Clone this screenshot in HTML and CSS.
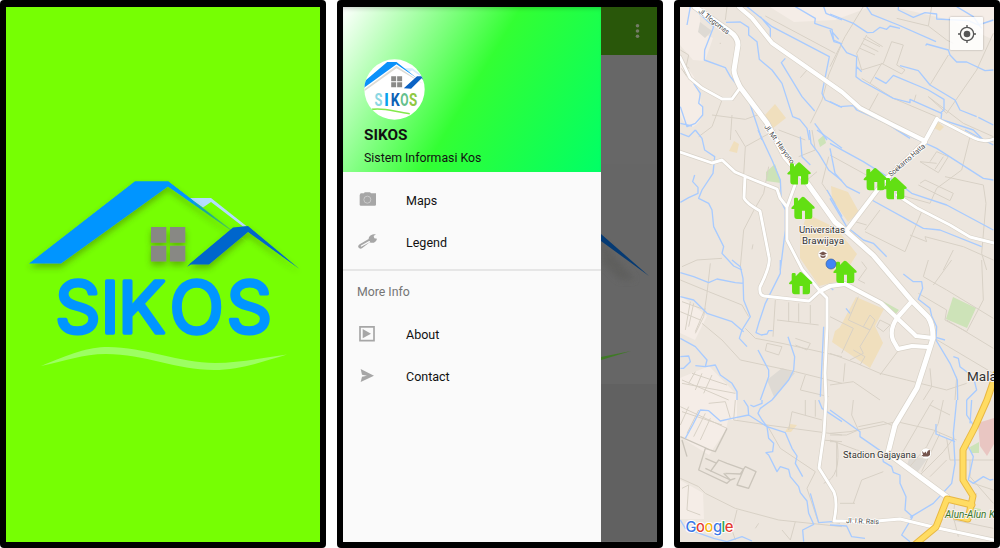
FILE: index.html
```html
<!DOCTYPE html>
<html lang="id">
<head>
<meta charset="utf-8">
<title>SIKOS</title>
<link rel="stylesheet" href="styles.css">
</head>
<body>
<main class="phones">
  <section class="phone">
    <div class="screen splash">
      <svg class="splash-logo" viewBox="20 170 290 210" width="290" height="210">
        <defs>
          <filter id="soft" x="-20%" y="-20%" width="140%" height="150%"><feDropShadow dx="0" dy="4" stdDeviation="3" flood-color="#365000" flood-opacity=".4"/></filter>
          <linearGradient id="fade" gradientUnits="userSpaceOnUse" x1="190" y1="199" x2="250" y2="245"><stop offset="0" stop-color="#0095ff"/><stop offset=".3" stop-color="#20a890" /><stop offset=".65" stop-color="#4dc94d"/><stop offset="1" stop-color="#76ff03" stop-opacity="0"/></linearGradient>
        </defs>
        <path fill="#b3dcff" d="M189 198H211L247 226.500H243L211 202L203 207.500Z"/>
        <g filter="url(#soft)">
          <path fill="#0095ff" d="M29 263.500L135 181.300H168L191 199L196 204L168 186.500L61 263.500Z"/>
          <path fill="url(#fade)" d="M168 181.300L250 244L168 186.500Z"/>
          <g fill="#888884"><path d="M151 227h15.300v15.700H151zM170 227h15.300v15.700H170zM151 245.700h15.300v15.700H151zM170 245.700h15.300v15.700H170z"/></g>
          <path fill="#0066cc" d="M187 267L190 263.500L233 227.500L248 226L299.500 269L248 232L209 264.500H191Z"/>
        </g>
        <text class="wordmark" y="332.500"><tspan x="55">S</tspan><tspan x="100.500">I</tspan><tspan x="118">K</tspan><tspan x="169.500">O</tspan><tspan x="226.500">S</tspan></text>
        <path fill="#9cff62" d="M41 366C70 354 88 347 108 347C144 347 180 363 215 363C240 363 262 358 287 354.500C265 361 240 370 214 370C176 370 145 354 106 354C82 354 66 361 41 366Z"/>
      </svg>
    </div>
  </section>

  <section class="phone">
    <div class="screen app">
      <aside class="drawer">
        <header class="drawer-header">
          <svg class="avatar" viewBox="0 0 184 184" width="61" height="61">
            <defs><clipPath id="disc"><circle cx="92" cy="92" r="91"/></clipPath></defs>
            <circle cx="92" cy="92" r="91" fill="#fff"/>
            <g clip-path="url(#disc)">
              <path fill="#d5edfc" d="M120 28H146L184 56V62L145 34L136 40Z"/>
              <path fill="#dddbd5" d="M0 92L98 20L180 76L98 28L0 98Z"/>
              <path fill="#0a91fa" d="M-4 72L70 9H98L160 58L98 16L0 87Z"/>
              <path fill="#8a8a88" d="M82 52h15v15H82zM100 52h15v15h-15zM82 70h15v15H82zM100 70h15v15h-15z"/>
              <path fill="#0b62c4" d="M120 88L160 52H176L184 62V70L174 58L142 90Z"/>
              <g class="avatar-word"><text x="32" y="141" fill="#8bd7e3" textLength="24" lengthAdjust="spacingAndGlyphs">S</text><text x="60" y="141" fill="#08a2ee" textLength="15" lengthAdjust="spacingAndGlyphs">I</text><text x="81" y="141" fill="#0c62b5" textLength="27" lengthAdjust="spacingAndGlyphs">K</text><text x="109" y="141" fill="#64c08c" textLength="25" lengthAdjust="spacingAndGlyphs">O</text><text x="136" y="141" fill="#8fc943" textLength="25" lengthAdjust="spacingAndGlyphs">S</text></g>
              <path fill="none" stroke="#83e94b" stroke-width="5" d="M24 152C62 146 94 160 138 165"/>
            </g>
          </svg>
          <h1 class="drawer-title">SIKOS</h1>
          <p class="drawer-subtitle">Sistem Informasi Kos</p>
        </header>
        <nav class="menu">
          <a class="menu-item"><svg class="icon" viewBox="0 0 60 48"><path fill="#a6a6a6" d="M8 4H18L20 1H36L39 4H54V38Q54 41 50 41H9Q5 41 5 38V9Z"/><circle cx="28" cy="23" r="10.500" fill="none" stroke="#c9c9c9" stroke-width="3"/></svg>Maps</a>
          <a class="menu-item"><svg class="icon" viewBox="0 0 60 48"><path fill="#a6a6a6" d="M32 15C32 5 42 0 54 1L47 6L49 13L57 14C55 25 45 29 35 25L12 43Q5 46 1 40Q-1 34 5 31Z"/><path d="M10 36L34 23" stroke="#fafafa" stroke-width="4" stroke-linecap="round"/></svg>Legend</a>
          <hr class="divider">
          <h2 class="menu-heading">More Info</h2>
          <a class="menu-item"><svg class="icon" viewBox="0 0 60 48"><path fill="none" stroke="#a6a6a6" stroke-width="5" d="M6 2.500H48V44H6Z"/><path fill="#a6a6a6" d="M14 9L39 23L14 37Z"/></svg>About</a>
          <a class="menu-item"><svg class="icon" viewBox="0 0 60 48"><path fill="#a6a6a6" d="M8 3L48 23L8 42L12 26L27 23L12 20Z"/></svg>Contact</a>
        </nav>
      </aside>
      <div class="backdrop">
        <div class="toolbar"><svg viewBox="0 0 56 49" width="56" height="49" fill="#737c66"><circle cx="36.500" cy="18.700" r="1.800"/><circle cx="36.500" cy="24" r="1.800"/><circle cx="36.500" cy="29.300" r="1.800"/></svg></div>
        <svg class="backdrop-art" viewBox="601 55 56 486" width="56" height="486">
          <path fill="#696969" d="M601 55h56v109h-56z" opacity=".35"/>
          <path fill="#5f5f5d" filter="url(#haze)" d="M601 239L635 280L620 280L601 262Z"/>
          <defs><filter id="haze" x="-50%" y="-50%" width="200%" height="200%"><feGaussianBlur stdDeviation="3"/></filter></defs>
          <path fill="#053a73" d="M601 234L649 276L601 241Z"/>
          <path fill="#3f7a25" d="M601 357L631 351L601 360Z"/>
          <path fill="#606060" d="M601 384h56v157h-56z" opacity=".7"/>
        </svg>
      </div>
    </div>
  </section>

  <section class="phone">
    <div class="screen map">
      <svg class="map-canvas" viewBox="680 7 314 535" width="314" height="535">
        <defs>
          <path id="house" d="M36 0Q38 0 40 2L70 30Q74 36 66 36H64V60Q64 67 57 67H42V42H33V67H18Q10 67 10 58V37H3Q-2 35 3 31L9 25V7Q9 3 13 3H17Q21 3 21 7V13L33 1Q34 0 36 0Z"/>
          <g id="roads">
            <path class="wide" d="M695 7L729 31Q738 37 738 45L734 70Q734 75 740 87L767 123L785 157L805 180L835 222L847 232L873 255L912 301L928 317Q933 324 933 338L927 357L917 388L895 425L888 453L897 460L947 497"/>
            <path class="avenue" d="M925 142L885 180L847 230M937 119L925 141M820 291L830 286L845 284L881 303L897 318L913 333L916 336L933 338M912 301L897 318Q889 330 893 340L898 349L912 346L928 347M739 7L752 18L772 43L842 92L860 108L893 125L925 141"/>
            <path class="mid" d="M937 119L974 138Q984 143 994 139M897 195L917 208L950 225L970 237L994 243M680 57L690 78L702 88L722 99L732 99L740 88M680 152L712 163L722 160L735 172L754 180L777 189L780 198L787 207L795 185M745 176L744 198Q746 203 760 211L769 257Q771 265 760 287Q759 295 764 296L809 301L820 291M787 207L787 240L802 269L820 291L827 298L827 328L825 373L826 400L824 433L819 468L834 492Q838 502 834 521H842L865 522L900 519L933 527L994 540"/>
          </g>
          <path id="yellow" d="M996 374L987 400L975 427L963 450L963 480L973 496L968 519L947 514M947 499L972 505M947 499L936 527L912 547"/>
        </defs>
        <path fill="#ede6de" d="M680 7h314v535H680z"/>
        <g fill="#f5ede7">
          <path d="M680 7H699L701 32L713 38L705 61L693 60L680 45ZM680 57L694 77L702 106Q704 121 693 127Q680 124 680 110ZM770 7H870L835 20L794 22ZM894 7H994V40L950 20ZM680 295L707 316L695 340L680 333ZM680 378L709 366L737 395L737 420H728L726 430L709 455L680 437ZM680 480L703 493L704 519H680Z"/>
        </g>
        <g fill="#f0dfbd">
          <path d="M765 115L775 104L786 118L772 129ZM734 141L739 144L737 153L729 151ZM831 186L848 192L859 212L848 222L832 199ZM807 214L836 228L857 254L840 281L819 286L800 258V235ZM856 297L884 309L875 326L883 343L870 368L832 342ZM938 122L944 127L940 131L934 128ZM790 424L797 425L791 432H785ZM835 331L843 325L841 344L832 342Z"/>
        </g>
        <g fill="#cde3b8"><path d="M766 172L775 164L781 183L766 181ZM818 140L824 135L826 143L820 147ZM879 299L899 310L894 316ZM953 297L976 308L967 328L946 319ZM970 447L979 442V453H971ZM970 507L981 509L976 520L968 512Z"/></g>
        <g fill="#dedad4"><path d="M700 22L712 31L705 38L698 32ZM767 380L782 368L795 373L774 397ZM910 456L927 459L917 473L907 465Z"/></g>
        <path fill="#e9c6c2" d="M978 423L994 418V444L987 456L980 446Z"/>

        <g class="lanes">
          <g transform="translate(672 0) scale(.33333)">
            <path d="M165 20L160 60M280 48L490 160M510 130L470 225L450 300L415 370M385 233L405 210M150 300L120 380L80 410M120 345L220 358L265 342M180 345L175 420M320 390L400 420M143 130h4M25 150L50 165L38 220M30 190L52 205M28 205L45 230"/>
          </g>
          <g transform="translate(830 0) scale(.33333)">
            <path d="M100 20L45 110L0 200M305 20L295 78L200 55M295 78L350 120L370 130M490 100L440 210L350 340L295 290M355 165L300 255M110 105L80 160L95 210L160 190L185 125L220 135L200 195L225 210L215 222L155 190L120 250L95 235M100 115L150 140M95 130L145 155M90 145L135 165M110 110L158 140M120 250L190 295L320 350M145 280L115 335M295 290L400 370L490 410M258 284L252 305"/>
          </g>
          <g transform="translate(672 130) scale(.33333)">
            <path d="M190 0L220 50L215 135M220 50L310 0M290 110L275 190L245 242L215 300L205 410M380 80L430 60L420 0M405 150L435 125M30 410L75 390L150 385M240 358l3-15M470 80L450 160L490 220"/>
          </g>
          <g transform="translate(830 130) scale(.33333)">
            <path d="M0 75L100 130L210 195L300 220L320 175L395 120L420 20M270 160L285 150L370 190L360 212L265 165M320 100L270 95L325 128L355 80L320 65L300 95M340 80L315 118M345 140L460 165L468 220L455 370L470 420M105 300L150 240M105 305L225 365L275 245M240 315L290 335L285 320L400 350L490 390M370 360L340 420M75 275L110 285"/>
          </g>
          <g transform="translate(672 260) scale(.33333)">
            <path d="M115 10L105 100L95 170L70 220M25 60L110 95L210 135L230 170M90 190L150 240L205 300L370 335L510 370M55 125L40 210M30 125L100 150M25 155L85 180M65 130L50 200M100 145L70 215M310 120L303 230M315 180L440 195M350 127V185M380 130V185M415 135V190M285 250L330 260L320 285L280 272ZM370 235L415 250L405 270L370 255M220 205L250 235L330 250L510 290M400 345L385 390L470 410M30 360L170 420M70 335L50 370M90 340L70 390M120 345L95 400M30 370L190 400M60 340L165 375"/>
          </g>
          <g transform="translate(830 260) scale(.33333)">
            <path d="M95 5L110 25L85 60L105 70M295 0L280 50L350 90L490 175M310 75L365 0M455 0L460 120L410 215M350 180L490 265M265 100L350 150L345 180L410 215M150 180L180 195L160 215L140 200ZM120 165L100 200L120 210L135 180ZM85 110L55 180L120 210L90 260L100 280L60 300M0 170L70 205L35 280M70 270L105 290L90 315M0 280L80 310L150 340L230 360L350 390L410 370M210 265L150 345M0 375L70 365L150 420M45 310L40 365M300 325L305 380L280 420M305 230L490 340M380 350L375 420"/>
          </g>
          <g transform="translate(672 400) scale(.33333)">
            <path d="M25 20L165 85M190 0L185 60L240 68L285 75L510 105M25 75L50 20M45 100L80 30M65 110L100 40M85 120L115 55M30 35L150 75M25 235L80 260L100 280L190 325L320 360L510 380M195 330L180 390L190 420M250 385l10-15M330 390L355 420M370 365L355 420M285 75L325 145L430 215L405 265L440 370M350 90L360 35L450 60M430 0V50M400 0V45M450 120L510 125M495 125Q510 230 455 250M110 10L160 5L175 55M30 265L50 255L45 330L85 345"/>
            <path class="block" d="M165 85L130 155L100 145L80 210L165 250L175 240L100 205M115 215L140 180L165 190L215 208L195 255L230 265L252 215L220 200L205 222L160 220M155 220L175 240L190 235M25 110L115 150M30 120L45 170M100 175L135 190"/>
          </g>
          <g transform="translate(830 400) scale(.33333)">
            <path d="M70 0L65 45L85 90L50 105H0M0 100L60 95L200 65L310 90L380 120M85 80L160 65L195 80M310 0L300 15L265 75L210 170M340 0L325 70L290 140L235 205M300 15L360 45M0 125L20 125V230M70 310L95 240L160 215M30 310H75M370 115L340 155L260 235M350 115L360 180H490M330 100L275 215M300 230L350 180M420 180V230L490 310M430 250L490 270M375 300L370 350L385 410M440 280L410 350M370 360L490 385M0 365L30 370M0 120L80 150L170 170"/>
          </g>
        </g>

        <g class="water">
          <g transform="translate(672 0) scale(.33333)">
            <path d="M60 20L125 80L98 150L97 180L160 203L175 230L230 300L270 420M65 250L85 280L80 310L92 320V345L70 370L45 380L25 320M25 370L60 378M162 67L205 66L230 82V105L255 125L262 178L300 210L330 250L362 350L383 358L405 385L412 420M225 20L300 80L472 170L450 280L460 300L510 322M370 20L430 55L428 70L480 88L485 120L510 132M455 20L462 40L510 60M480 95L500 118M340 175L328 188L390 290L428 333M428 370L465 420M265 50L295 85V125M55 20L45 75"/>
          </g>
          <g transform="translate(830 0) scale(.33333)">
            <path d="M110 20L125 43L205 75L318 125M0 42L70 70L112 98L130 97L150 82L170 88L180 78L210 85M0 90L12 125L30 130L50 158L80 170L78 230L95 243L190 295L240 308L240 298L335 340L333 358L430 390L460 420M205 20V30L250 52L285 38L320 42V57L415 62L445 75L490 60M380 20L430 50L455 85M287 137L290 132L355 150L360 165L380 186H410L465 212L490 210M210 197L265 212L300 255L375 300L390 330L440 350M95 215L80 200M135 232L168 250L190 226L295 270L342 298V330L330 340M445 352L490 375M0 305L30 320L70 317L80 330L170 370L240 415"/>
          </g>
          <g transform="translate(672 130) scale(.33333)">
            <path d="M258 0L300 90L325 150L328 215L340 240V300L325 420M70 0L90 25L98 60L128 80L123 130L90 180L80 205L110 220L120 240L125 290L155 350L150 370L185 408L210 420M25 10L50 20L70 0M25 217L50 203L78 190V172L62 155L68 135M412 0L417 40L440 70L470 120L510 152M385 20L390 80L415 105M435 0L510 55M465 180L510 260"/>
          </g>
          <g transform="translate(830 130) scale(.33333)">
            <path d="M0 40L100 95L220 170L245 190L350 225L490 300M0 55L15 130L50 170L90 190M120 207L280 295L330 300L455 350M200 0L320 55L460 145L490 150M405 0L490 45M0 205L50 290L100 330L130 340L170 380"/>
          </g>
          <g transform="translate(672 260) scale(.33333)">
            <path d="M180 0L205 20L213 55L215 120L235 170L210 210L202 235L225 260M325 0V40L280 130L260 190L252 218L268 225L285 222L290 212H302M25 38L65 50L110 68L135 57L190 68L215 70M25 110L65 120L105 160L180 185L215 215M25 235L70 260L105 300L100 320L130 315L145 345L180 370L195 395V420M25 290L50 288L55 305L35 325H25M70 317L100 320M258 270L290 330V350L265 420M348 230L368 290L365 330L350 360L300 420M455 200L445 410"/>
          </g>
          <g transform="translate(830 260) scale(.33333)">
            <path d="M220 42L250 65H275L278 85L265 118L300 145L305 168L320 200L318 240L360 310L382 360L383 420M310 230L345 240M370 290L385 295L390 320L430 350L440 390L410 420M0 82L10 90M48 145L60 160"/>
          </g>
          <g transform="translate(672 400) scale(.33333)">
            <path d="M215 0L228 20L230 45L285 80L290 115L305 130L302 155L282 158L290 165L315 215L325 200L350 208L355 230L380 260L385 278L405 303L410 340L425 373L392 390L395 425M300 0L265 25L258 40L270 60L285 80L340 98L360 145L375 168L370 190L392 230M235 15L245 20L270 10V0M40 115L62 75L85 30L110 32L145 63L180 55L230 45M415 280L440 368L480 365M440 0L450 25L510 65M25 360L40 385L125 415L165 425L210 410L240 423"/>
          </g>
          <g transform="translate(830 400) scale(.33333)">
            <path d="M0 30L90 95V110L155 155L160 185L185 200L190 217L210 225V250L228 290L225 330L248 350L215 405L240 425M380 0L370 100L375 190L365 250L310 310L240 352M318 72V102L375 125M410 0V45L440 90L405 120L430 170L415 240L430 250L460 230L480 240L490 238M425 0L420 70M0 375L50 378L65 410L105 415"/>
          </g>
        </g>
        <use href="#roads" class="casing"/>
        <use href="#roads" class="surface"/>
        <use href="#yellow" class="yellow-edge"/>
        <use href="#yellow" class="yellow-fill"/>

        <g class="street">
          <text transform="translate(698 12) rotate(38)" textLength="37">Jl. Tlogomas</text>
          <text transform="translate(764 127) rotate(54)" textLength="46">Jl. Mt. Haryono</text>
          <text transform="translate(891 177) rotate(-41)" textLength="46">Soekarno Hatta</text>
          <text transform="translate(846 523) rotate(2)" textLength="33">Jl. I.R. Rais</text>
        </g>
        <g fill="#62df13"><use href="#house" transform="translate(787 162.300) scale(.333)"/><use href="#house" transform="translate(791 196.700) scale(.333)"/><use href="#house" transform="translate(863.300 168) scale(.333)"/><use href="#house" transform="translate(883 177) scale(.333)"/><use href="#house" transform="translate(833 260.700) scale(.333)"/><use href="#house" transform="translate(788.700 272) scale(.333)"/></g>
        <g class="place">
          <text x="799" y="233" textLength="46">Universitas</text>
          <text x="802" y="244" textLength="42">Brawijaya</text>
          <text x="843" y="457.500" textLength="73">Stadion Gajayana</text>
          <text class="city" x="967" y="381">Malang</text>
          <text class="park" x="945" y="517.500">Alun-Alun Kota</text>
        </g>
        <circle cx="823" cy="254.500" r="5" fill="#fff" stroke="#d8cec0" stroke-width=".5"/>
        <path fill="#76564e" d="M819 253.500L823 251.500L827 253.500L823 255.500ZM820.500 255L823 256.500L825.500 255V257Q823 259 820.500 257Z"/>
        <circle cx="831" cy="264" r="5" fill="#4285f4" stroke="#375f9f" stroke-width=".7"/>
        <circle cx="926" cy="453.500" r="5.500" fill="#fff" stroke="#d8cec0" stroke-width=".5"/>
        <path fill="#76564e" d="M922 451L924 453L926 451.500V454L928 450.500L930 450V455L928 456.500H923L921.500 455H923Z"/>
        <text class="google" x="685.500" y="531.500" textLength="48"><tspan fill="#3b78e7">G</tspan><tspan fill="#e53b30">o</tspan><tspan fill="#f8b60c">o</tspan><tspan fill="#3b78e7">g</tspan><tspan fill="#2da94f">l</tspan><tspan fill="#e53b30">e</tspan></text>
      </svg>
      <button class="locate" aria-label="Lokasi saya"><svg viewBox="0 0 54 54" width="18" height="18"><circle cx="27" cy="27" r="10" fill="#555"/><circle cx="27" cy="27" r="20" fill="none" stroke="#555" stroke-width="4"/><path stroke="#555" stroke-width="4" d="M27 0V9M27 45V54M0 27H9M45 27H54"/></svg></button>
    </div>
  </section>
</main>
</body>
</html>
```
FILE: styles.css
```css
* { box-sizing: border-box; }
body { margin: 0; background: #fff; font-family: Roboto, "Liberation Sans", sans-serif; overflow: hidden; }
.phones { display: flex; justify-content: space-between; width: 1000px; height: 548px; }
.phone { width: 326px; height: 548px; padding: 7px 6px 6px; background: #000; border-radius: 4px; }
.screen { position: relative; height: 535px; overflow: hidden; }

.splash { display: flex; justify-content: center; padding-top: 163px; background: #76ff03; }
.splash-logo { display: block; flex: none; margin-left: 4px; }
.wordmark { font: 400 71px Inter, sans-serif; fill: #0095ff; stroke: #0095ff; stroke-width: 3.4px; stroke-linejoin: round; }

.app { display: flex; }
.drawer { width: 258px; background: #fafafa; }
.drawer-header { height: 165px; padding: 52px 0 0 21px; background: linear-gradient(121deg, #fff 0%, #3f3 50%, #0f6 100%); box-shadow: inset 0 4px 5px -3px rgba(0, 0, 0, .22); }
.avatar { display: block; }
.avatar-word { font: 700 54px Roboto, sans-serif; }
.drawer-title { margin: 5px 0 0; font-size: 15.3px; line-height: 20px; font-weight: 700; color: #111; }
.drawer-subtitle { margin: 5px 0 0; font-size: 12.3px; line-height: 16px; color: #111; }
.menu { padding-top: 7.5px; }
.menu-item { display: flex; align-items: center; height: 41.8px; padding-left: 15px; gap: 28px; font-size: 12.5px; font-weight: 400; color: #111; }
.icon { width: 20px; height: 16px; flex: none; }
.divider { height: 2px; margin: 6px 0 0; border: 0; background: #e6e6e6; }
.menu-heading { margin: 0; padding: 13px 0 0 14px; height: 42.5px; font-size: 12.3px; line-height: 16px; font-weight: 400; color: #757575; }
.backdrop { width: 56px; background: #666; }
.toolbar { height: 48px; background: #29570a; }
.toolbar svg, .backdrop-art { display: block; }

.map-canvas { display: block; }
.lanes { fill: none; stroke: #d8d1c6; stroke-width: 3px; stroke-linejoin: round; }
.block { stroke: #cbc5bb; stroke-width: 4px; }
.water { fill: none; stroke: #a8cbff; stroke-width: 4px; stroke-linejoin: round; }
.casing, .surface, .yellow-edge, .yellow-fill { fill: none; stroke-linejoin: round; stroke-linecap: round; }
.casing { stroke: #d8d2c8; --wide: 6.4px; --avenue: 5.4px; --mid: 4.2px; }
.surface { stroke: #fff; --wide: 5px; --avenue: 4.2px; --mid: 2.9px; }
.wide { stroke-width: var(--wide); }
.avenue { stroke-width: var(--avenue); }
.mid { stroke-width: var(--mid); }
.yellow-edge { stroke: #e9b843; stroke-width: 7px; }
.yellow-fill { stroke: #ffdc62; stroke-width: 5px; }
.street { font-size: 7.2px; fill: #444; stroke: #fff; stroke-width: 1.5px; paint-order: stroke; }
.place { font-size: 9.8px; fill: #333; stroke: #f6f1eb; stroke-width: 2px; paint-order: stroke; }
.city { font-size: 13.5px; }
.park { font-size: 10px; font-style: italic; fill: #39782c; }
.google { font: 500 14.8px Inter, sans-serif; stroke: #fff; stroke-width: 2px; paint-order: stroke; }
.locate { position: absolute; top: 10px; right: 11px; display: flex; align-items: center; justify-content: center; width: 33px; height: 33px; padding: 0; border: 0; border-radius: 1px; background: rgba(255, 255, 255, .85); box-shadow: 0 0 2px rgba(0, 0, 0, .35); }
```
